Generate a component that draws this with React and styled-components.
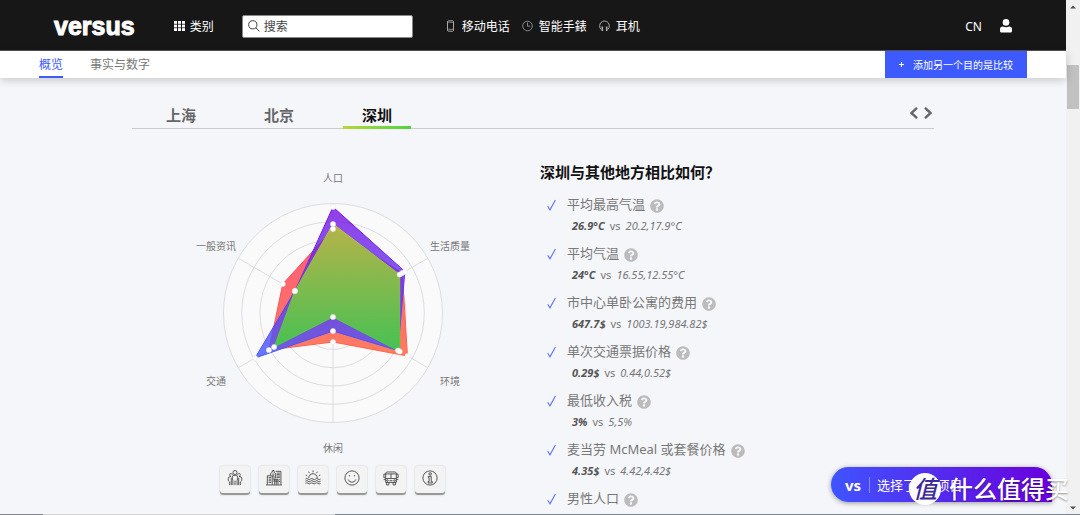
import React from "react";
import styled, { createGlobalStyle } from "styled-components";
import { FaQuestionCircle } from "react-icons/fa";

const FONT = `"Noto Sans", "Noto Sans CJK SC", sans-serif`;

const GlobalStyle = createGlobalStyle`
  * {
    box-sizing: border-box;
  }
  body {
    margin: 0;
    overflow: hidden;
    background: #f5f6fa;
    font-family: ${FONT};
    color: #666;
  }
  button, input {
    font-family: inherit;
  }
  a {
    color: inherit;
    text-decoration: none;
  }
  h2, p, ul {
    margin: 0;
    padding: 0;
  }
`;

const AXES = ["人口", "生活质量", "环境", "休闲", "交通", "一般资讯"];

const SERIES = [
  { id: "red", opacity: 0.85, values: [84, 80, 86, 29, 74, 58] },
  { id: "blue", opacity: 0.8, values: [106, 83, 75, 18, 90, 44] },
  { id: "green", opacity: 0.9, values: [89, 77, 77, 4, 68, 44] },
];

const FACTS = [
  { title: "平均最高气温", own: "26.9°C", others: "20.2,17.9°C" },
  { title: "平均气温", own: "24°C", others: "16.55,12.55°C" },
  { title: "市中心单卧公寓的费用", own: "647.7$", others: "1003.19,984.82$" },
  { title: "单次交通票据价格", own: "0.29$", others: "0.44,0.52$" },
  { title: "最低收入税", own: "3%", others: "5,5%" },
  { title: "麦当劳 McMeal 或套餐价格", own: "4.35$", others: "4.42,4.42$" },
  { title: "男性人口" },
];

const CX = 150;
const CY = 145;
const RADIUS = 109.5;
const LABEL_RADIUS = 135;

function polar(index, r) {
  const angle = (index * Math.PI) / 3;
  return [CX + r * Math.sin(angle), CY - r * Math.cos(angle)];
}

function Radar() {
  return (
    <Chart viewBox="0 0 300 290" role="img" aria-label="深圳">
      <defs>
        <linearGradient id="red" x1="0" y1="0" x2="0" y2="1">
          <stop offset="0" stopColor="#ff3c62" />
          <stop offset="1" stopColor="#ff6747" />
        </linearGradient>
        <linearGradient id="blue" x1="0" y1="0" x2="0" y2="1">
          <stop offset="0" stopColor="#7a10e2" />
          <stop offset="1" stopColor="#4459ff" />
        </linearGradient>
        <linearGradient id="green" x1="0" y1="0" x2="0" y2="1">
          <stop offset="0" stopColor="#bbc23a" />
          <stop offset="1" stopColor="#42cc44" />
        </linearGradient>
      </defs>
      <circle cx={CX} cy={CY} r={RADIUS} fill="#fafafb" />
      <g fill="none" stroke="#dddde0">
        {[1, 2, 3, 4, 5, 6].map((n) => (
          <circle key={n} cx={CX} cy={CY} r={(RADIUS * n) / 6} />
        ))}
        {AXES.map((name, i) => {
          const [x, y] = polar(i, RADIUS);
          return <line key={name} x1={CX} y1={CY} x2={x} y2={y} />;
        })}
      </g>
      {SERIES.map(({ id, opacity, values }) => (
        <polygon
          key={id}
          points={values.map((v, i) => polar(i, v).join(",")).join(" ")}
          fill={`url(#${id})`}
          fillOpacity={opacity}
          stroke={`url(#${id})`}
        />
      ))}
      {SERIES.map(({ id, values }) =>
        values.map((v, i) => {
          const [x, y] = polar(i, v);
          return (
            <circle
              key={id + i}
              cx={x}
              cy={y}
              r="2.6"
              fill="#fff"
              stroke="#e4e4ea"
              strokeWidth="0.5"
            />
          );
        })
      )}
      {AXES.map((name, i) => {
        const [x, y] = polar(i, LABEL_RADIUS);
        return (
          <AxisLabel key={name} x={x} y={y + 4} textAnchor="middle">
            {name}
          </AxisLabel>
        );
      })}
    </Chart>
  );
}

const GROUPS = [
  {
    name: "人口",
    icon: (
      <>
        <circle cx="9" cy="2.8" r="2.3" />
        <path d="M6.6 5.2Q3.6 2.6 3 5.2Q3 6.8 4.4 7.2M11.4 5.2Q14.4 2.6 15 5.2Q15 6.8 13.6 7.2" />
        <path d="M6.6 17V12L5.8 8Q6 5.8 9 5.8T12.2 8L11.4 12V17M9 12V17M4.6 7.2Q1.6 7.4 1.4 9.4V12L3 13.5V17M13.4 7.2Q16.4 7.4 16.6 9.4V12L15 13.5V17M4.8 9V17M13.2 9V17" />
      </>
    ),
  },
  {
    name: "生活质量",
    icon: (
      <>
        <path d="M1.5 16.5V6.5H7V16.5M5 6V4L7 2.6V.6H9V2.6L10.8 4V9.5M10.8 1.5H16.8V16.5M0 16.8H18M7 6.5H9V10M8 10.5H13.5V16.5M9.8 10.5V16.5M11.6 10.5V16.5" />
        <path d="M3 8.5H5.8M3 10.3H5.8M3 12.1H5.8M3 14H5.8M12 3.5H15.6M12 5.2H15.6M12 6.9H15.6M12 8.6H15.6M14.4 11H15.8M14.4 13H15.8M7 4.6H9.4M8 12.5H13.5" />
      </>
    ),
  },
  {
    name: "环境",
    icon: (
      <>
        <path d="M4.2 9A4.8 4.8 0 0 1 13.8 9M9 2.6V.5M5 3.6L4 1.9M13 3.6L14 1.9M2.4 6.5L.8 5.6M15.6 6.5L17.2 5.6" />
        <path d="M.5 10.2Q2 8.8 3.4 10.2T6.2 10.2T9 10.2T11.8 10.2T14.6 10.2T17.5 10.2M.5 12.6Q2 11.2 3.4 12.6T6.2 12.6T9 12.6T11.8 12.6T14.6 12.6T17.5 12.6M.5 15Q2 13.6 3.4 15T6.2 15T9 15T11.8 15T14.6 15T17.5 15" />
      </>
    ),
  },
  {
    name: "休闲",
    icon: (
      <>
        <circle cx="9" cy="9" r="8" />
        <path d="M4.6 10.6Q5.8 13.8 9 13.8T13.4 10.6M6.2 5.8V7.2M11.8 5.8V7.2" />
      </>
    ),
  },
  {
    name: "交通",
    icon: (
      <>
        <path d="M3 14V4Q3 2.2 5 2.2H13Q15 2.2 15 4V14ZM3 4.4H15M3 9.6H15M9 4.4V9.6" />
        <path d="M3 4.6H1V8.6H2.4M15 4.6H17V8.6H15.6M3 10.8H.8M15 10.8H17.2M4 14V16.8H6.6V14M11.4 14V16.8H14V14M7.4 12H10.6" />
        <circle cx="5" cy="11.9" r=".9" />
        <circle cx="13" cy="11.9" r=".9" />
      </>
    ),
  },
  {
    name: "一般资讯",
    icon: (
      <>
        <circle cx="9" cy="9" r="8" />
        <circle cx="9.2" cy="4.4" r="1.4" />
        <path d="M7 7.2H10.4V13H11.6V14.6H6.8V13H8V8.6H7Z" />
      </>
    ),
  },
];

function App() {
  return (
    <>
      <GlobalStyle />
      <Window>
        <Page>
          <Header>
            <Logo href="#home">versus</Logo>
            <Categories href="#categories">
              <svg width="11" height="10" viewBox="0 0 11 10" fill="currentColor">
                {[0, 4, 8].map((x) =>
                  [0, 3.6, 7.2].map((y) => (
                    <rect key={`${x}-${y}`} x={x} y={y} width="3" height="2.8" />
                  ))
                )}
              </svg>
              类别
            </Categories>
            <Search>
              <svg width="12" height="12" viewBox="0 0 12 12" fill="none" stroke="#444">
                <circle cx="4.8" cy="4.8" r="4.1" />
                <path d="M7.8 7.8L11.4 11.4" />
              </svg>
              <input type="text" placeholder="搜索" aria-label="搜索" />
            </Search>
            <TopLinks>
              <a href="#phones">
                <svg width="11" height="12" viewBox="0 0 11 12" fill="none" stroke="#aaa">
                  <rect x="2.5" y=".8" width="6" height="10.4" rx="1" />
                  <path d="M2.5 2.3H8.5M2.5 9.3H8.5" strokeWidth=".7" />
                </svg>
                移动电话
              </a>
              <a href="#watches">
                <svg width="11" height="12" viewBox="0 0 11 12" fill="none" stroke="#888">
                  <circle cx="5.5" cy="6" r="4.8" />
                  <path d="M5.5 2.5V6.2H8.2" />
                </svg>
                智能手錶
              </a>
              <a href="#headphones">
                <svg width="11" height="12" viewBox="0 0 11 12" fill="none" stroke="#aaa">
                  <path d="M2 9.5Q.6 8 .7 5.8A4.8 4.8 0 0 1 10.3 5.8Q10.4 8 9 9.5" />
                  <path d="M3.3 6.5V11M7.7 6.5V11" strokeWidth="1.6" />
                </svg>
                耳机
              </a>
            </TopLinks>
            <Account>
              <a href="#language">CN</a>
              <a href="#account" aria-label="account">
                <svg width="12" height="14" viewBox="0 0 12 14" fill="#fff">
                  <circle cx="6" cy="3.4" r="3.3" />
                  <path d="M0 12V10.4Q0 7.6 2.8 7.6Q6 9 9.2 7.6Q12 7.6 12 10.4V12Q12 13.6 10.5 13.6H1.5Q0 13.6 0 12Z" />
                </svg>
              </a>
            </Account>
          </Header>

          <SubNav>
            <SubLink href="#overview" $active>
              概览
            </SubLink>
            <SubLink href="#facts">事实与数字</SubLink>
            <AddButton type="button">
              <svg width="5" height="5" viewBox="0 0 5 5" stroke="#fff">
                <path d="M2.5 0V5M0 2.5H5" />
              </svg>
              添加另一个目的是比较
            </AddButton>
          </SubNav>

          <Content>
            <Tabs>
              <Tab type="button">上海</Tab>
              <Tab type="button">北京</Tab>
              <Tab type="button" $active>
                深圳
              </Tab>
              <Arrows>
                <button type="button" aria-label="previous">
                  <svg width="8" height="12" viewBox="0 0 8 12">
                    <path d="M7 .8L1.6 6L7 11.2" />
                  </svg>
                </button>
                <button type="button" aria-label="next">
                  <svg width="8" height="12" viewBox="0 0 8 12">
                    <path d="M1 .8L6.4 6L1 11.2" />
                  </svg>
                </button>
              </Arrows>
            </Tabs>
            <Columns>
              <ChartColumn>
                <Radar />
                <Groups>
                  {GROUPS.map(({ name, icon }) => (
                    <GroupButton key={name} type="button" aria-label={name}>
                      <svg width="16" height="16" viewBox="0 0 18 18">
                        {icon}
                      </svg>
                    </GroupButton>
                  ))}
                </Groups>
              </ChartColumn>
              <FactColumn>
                <h2>深圳与其他地方相比如何？</h2>
                <ul>
                  {FACTS.map(({ title, own, others }) => (
                    <Fact key={title}>
                      <Check width="9" height="12" viewBox="0 0 9 12">
                        <path d="M.7 7.2L3 10.8L8.4 1" />
                      </Check>
                      <div>
                        <FactTitle>
                          {title}
                          <FaQuestionCircle size={14} color="#bbb" />
                        </FactTitle>
                        {own && (
                          <FactValues>
                            <b>{own}</b>
                            <span>vs</span>
                            <i>{others}</i>
                          </FactValues>
                        )}
                      </div>
                    </Fact>
                  ))}
                </ul>
              </FactColumn>
            </Columns>
          </Content>
        </Page>

        <ScrollBar>
          <svg width="6" height="4" viewBox="0 0 6 4">
            <path d="M0 3.5L3 .5L6 3.5Z" fill="#505050" />
          </svg>
          <Thumb />
          <svg width="6" height="4" viewBox="0 0 6 4">
            <path d="M0 .5L3 3.5L6 .5Z" fill="#505050" />
          </svg>
        </ScrollBar>

        <Compare type="button">
          <b>vs</b>
          <span>选择了3个项目</span>
        </Compare>
        <Watermark>
          <span>值</span>
          什么值得买
        </Watermark>
        <BottomEdge />
      </Window>
    </>
  );
}

const Window = styled.div`
  position: relative;
  display: flex;
  height: 100vh;
  overflow: hidden;
`;

const Page = styled.div`
  flex: 1;
  min-width: 0;
`;

const Header = styled.header`
  display: flex;
  align-items: center;
  height: 51px;
  padding: 2px 54px 0;
  background: #171717;
  border-bottom: 1px solid #555;
  color: #fff;
  font-size: 12px;
`;

const Logo = styled.a`
  font-family: "Liberation Sans", sans-serif;
  font-size: 25px;
  font-weight: 700;
  -webkit-text-stroke: 1px #fff;
`;

const Categories = styled.a`
  display: flex;
  align-items: center;
  gap: 5px;
  margin-left: 39px;
`;

const Search = styled.label`
  display: flex;
  align-items: center;
  gap: 4px;
  flex: 0 1 171px;
  min-width: 0;
  height: 23px;
  margin-left: 28px;
  padding: 0 5px;
  background: #fff;
  border: 1px solid #888;
  border-radius: 2px;
  svg {
    flex-shrink: 0;
  }
  input {
    flex: 1;
    min-width: 0;
    padding: 0;
    border: 0;
    outline: 0;
    background: none;
    font-size: 12px;
  }
  input::placeholder {
    color: #444;
  }
`;

const TopLinks = styled.nav`
  display: flex;
  gap: 12px;
  margin-left: 32px;
  a {
    display: flex;
    align-items: center;
    gap: 6px;
  }
`;

const Account = styled.div`
  display: flex;
  align-items: center;
  gap: 18px;
  margin-left: auto;
  a {
    display: flex;
  }
`;

const SubNav = styled.nav`
  position: relative;
  display: flex;
  align-items: stretch;
  gap: 27px;
  height: 27px;
  padding: 0 39px;
  background: #fff;
  box-shadow: 0 2px 10px rgba(0, 0, 0, 0.2);
`;

const SubLink = styled.a`
  height: 27px;
  border-bottom: 2px solid ${(p) => (p.$active ? "#3c5bff" : "transparent")};
  color: ${(p) => (p.$active ? "#3c5bff" : "#777")};
  font-size: 12px;
  line-height: 28px;
`;

const AddButton = styled.button`
  display: flex;
  align-items: center;
  gap: 9px;
  margin-left: auto;
  padding: 0 14px;
  border: 0;
  background: #3d5afe;
  color: #fff;
  font-size: 10px;
`;

const Content = styled.main`
  max-width: 802px;
  margin: 0 auto;
  padding-top: 22px;
`;

const Tabs = styled.div`
  display: flex;
  height: 29px;
  background: linear-gradient(#ccc, #ccc) bottom / 100% 1px no-repeat;
`;

const Tab = styled.button`
  width: 68px;
  margin: 0 15px;
  padding: 0 0 1px;
  border: 0;
  background: ${(p) =>
    p.$active
      ? "linear-gradient(90deg, #b9d63c, #4fd43f) bottom / 100% 3px no-repeat"
      : "none"};
  color: ${(p) => (p.$active ? "#111" : "#666")};
  font-size: 15px;
  font-weight: 700;
`;

const Arrows = styled.div`
  display: flex;
  align-items: center;
  gap: 6px;
  margin-left: auto;
  padding: 0 2px 4px 0;
  button {
    display: flex;
    padding: 0;
    border: 0;
    background: none;
  }
  path {
    fill: none;
    stroke: #666;
    stroke-width: 2.4;
  }
`;

const Columns = styled.div`
  display: grid;
  grid-template-columns: 1fr 1fr;
`;

const ChartColumn = styled.section`
  display: flex;
  flex-direction: column;
  align-items: center;
  gap: 8px;
  padding-top: 39px;
`;

const Chart = styled.svg`
  width: 300px;
  height: 290px;
`;

const AxisLabel = styled.text`
  fill: #777;
  font-size: 10px;
`;

const Groups = styled.div`
  display: flex;
  gap: 9px;
`;

const GroupButton = styled.button`
  display: flex;
  align-items: center;
  justify-content: center;
  width: 30px;
  height: 29px;
  padding: 0 0 5px;
  border: 0;
  border-radius: 3px;
  background: #f3f3f3;
  box-shadow: inset 0 -2px 0 #999, 0 0 2px rgba(0, 0, 0, 0.2);
  svg {
    fill: none;
    stroke: #444;
    stroke-width: 1;
  }
`;

const FactColumn = styled.section`
  padding: 32px 0 0 7px;
  h2 {
    margin-bottom: 11px;
    color: #111;
    font-size: 15px;
    font-weight: 700;
    line-height: 22px;
  }
`;

const Fact = styled.li`
  display: flex;
  gap: 11px;
  height: 49px;
  padding-left: 7px;
`;

const Check = styled.svg`
  margin-top: 5px;
  fill: none;
  stroke: #5a73ff;
  stroke-width: 1.1;
`;

const FactTitle = styled.p`
  display: flex;
  align-items: center;
  gap: 5px;
  font-size: 13px;
  line-height: 21px;
  color: #777;
  svg {
    margin-top: 2px;
  }
`;

const FactValues = styled.p`
  display: flex;
  gap: 5px;
  padding-left: 5px;
  font-size: 11px;
  line-height: 21px;
  color: #777;
  b {
    font-style: italic;
    color: #555;
  }
`;

const ScrollBar = styled.div`
  display: flex;
  flex-direction: column;
  align-items: center;
  justify-content: space-between;
  width: 14px;
  padding: 5px 0;
  background: #f1f1f1;
`;

const Thumb = styled.div`
  width: 12px;
  height: 44px;
  margin: 56px 0 auto;
  background: #c1c1c1;
`;

const Compare = styled.button`
  position: absolute;
  right: 28px;
  bottom: 13px;
  display: flex;
  align-items: center;
  gap: 8px;
  width: 221px;
  height: 35px;
  padding: 0 14px;
  border: 0;
  border-radius: 18px 18px 0 18px;
  background: linear-gradient(90deg, #3f54ff, #6a00dc);
  box-shadow: 0 1px 5px rgba(0, 0, 0, 0.4);
  color: #fff;
  b {
    font-size: 15px;
  }
  span {
    padding-left: 7px;
    border-left: 1px solid #8f86ff;
    font-size: 13px;
    line-height: 16px;
  }
`;

const Watermark = styled.div`
  position: absolute;
  right: 11px;
  bottom: 10px;
  display: flex;
  align-items: center;
  gap: 8px;
  color: #fff;
  font-size: 24px;
  font-weight: 500;
  line-height: 32px;
  text-shadow: 0 1px 2px rgba(0, 0, 0, 0.4);
  span {
    width: 32px;
    height: 32px;
    border-radius: 50%;
    background: #fff;
    color: #3d2a9a;
    text-align: center;
    text-shadow: none;
    font-style: italic;
  }
`;

const BottomEdge = styled.div`
  position: absolute;
  right: 0;
  bottom: 0;
  left: 0;
  height: 1px;
  background: linear-gradient(
    90deg,
    #85858c 4%,
    #d4d4d6 4%,
    #d4d4d6 31%,
    #7d8590 31%
  );
`;

export default App;
